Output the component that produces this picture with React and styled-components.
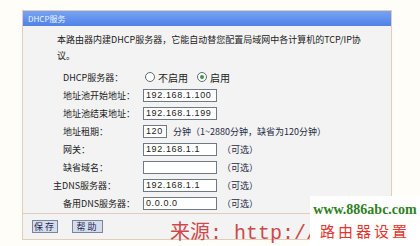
import styled, { createGlobalStyle } from "styled-components";

const GlobalStyle = createGlobalStyle`
  html, body {
    margin: 0;
    padding: 0;
    background: #fffdf7;
  }
  body {
    font-family: "Noto Sans CJK SC", "Liberation Sans", sans-serif;
  }
`;

const Page = styled.div`
  position: relative;
  width: 420px;
  height: 246px;
  overflow: hidden;
  padding: 10px 0 0 22px;
  box-sizing: border-box;
`;

const Panel = styled.section`
  width: 370px;
  border: 1px solid #e2cdb8;
  background: #f3f3f3;
  box-sizing: border-box;
`;

const Header = styled.div`
  height: 15px;
  line-height: 15px;
  padding-left: 5px;
  font-size: 8px;
  color: #eef3ff;
  background: linear-gradient(#77a3f3, #4f82e8);
`;

const Body = styled.div`
  padding: 6px 0 1px;
  color: #222;
  font-size: 9px;
`;

const Intro = styled.p`
  margin: 0;
  padding-left: 34px;
  line-height: 16px;
  white-space: nowrap;
`;

const Form = styled.div`
  margin-top: 4px;
  padding-left: 40px;
`;

const Row = styled.div`
  display: flex;
  align-items: center;
  height: 18px;
`;

const Label = styled.span`
  width: ${(p) => 80 - (p.$shift || 0)}px;
  margin-left: ${(p) => p.$shift || 0}px;
  white-space: nowrap;
`;

const Input = styled.div`
  width: ${(p) => p.$w || 74}px;
  height: 13px;
  box-sizing: border-box;
  border: 1px solid #6f7a86;
  background: #fff;
  padding-left: 2px;
  font-family: "Liberation Sans", sans-serif;
  font-size: 9px;
  line-height: 11px;
  letter-spacing: 0.6px;
  color: #222;
`;

const Note = styled.span`
  margin-left: ${(p) => p.$gap || 5}px;
  color: #1f2a44;
  white-space: nowrap;
`;

const RadioGroup = styled.div`
  display: flex;
  align-items: center;
  gap: 3px;
  padding-left: 2px;
  font-size: 10px;
`;

const Radio = styled.span`
  display: inline-flex;
  align-items: center;
  justify-content: center;
  width: 8px;
  height: 8px;
  border: 1px solid #5b6a76;
  border-radius: 50%;
  background: #fff;
  margin-left: ${(p) => (p.$first ? 0 : 6)}px;

  &::after {
    content: "";
    display: ${(p) => (p.$checked ? "block" : "none")};
    width: 4px;
    height: 4px;
    border-radius: 50%;
    background: #3c9a3c;
  }
`;

const Footer = styled.div`
  display: flex;
  align-items: center;
  gap: 14px;
  height: 25px;
  padding-left: 9px;
  border-top: 1px solid #e2cdb8;
`;

const Button = styled.button`
  width: ${(p) => p.$w}px;
  height: 13px;
  padding: 0;
  border: 1px solid #7c8496;
  background: #d5dcec;
  color: #1b2550;
  font-family: "Noto Sans CJK SC", sans-serif;
  font-size: 9px;
  line-height: 11px;
  letter-spacing: 2px;
  white-space: nowrap;
  text-align: center;
`;

const Source = styled.div`
  position: absolute;
  left: 170px;
  top: 216px;
  color: #cc4a4c;
  font-size: 20px;
  white-space: nowrap;
  font-family: "Liberation Mono", "Noto Sans CJK SC", monospace;
`;

const Badge = styled.div`
  position: absolute;
  left: 310px;
  top: 196px;
  width: 110px;
  height: 50px;
  background: #fff;
  display: flex;
  flex-direction: column;
  align-items: center;
  padding-top: 6px;
  box-sizing: border-box;
`;

const Site = styled.div`
  font-family: "Liberation Serif", serif;
  font-weight: bold;
  font-size: 14px;
  line-height: 16px;
  color: #2f7f25;
`;

const Caption = styled.div`
  margin-top: 4px;
  font-size: 15px;
  line-height: 18px;
  letter-spacing: 3px;
  color: #e2352d;
`;

const rows = [
  { label: "地址池开始地址：", value: "192.168.1.100" },
  { label: "地址池结束地址：", value: "192.168.1.199" },
];

const optional = [
  { label: "网关：", value: "192.168.1.1" },
  { label: "缺省域名：", value: "" },
  { label: "主DNS服务器：", value: "192.168.1.1", shift: -10 },
  { label: "备用DNS服务器：", value: "0.0.0.0" },
];

export default function App() {
  return (
    <>
      <GlobalStyle />
      <Page>
        <Panel>
          <Header>DHCP服务</Header>
          <Body>
            <Intro>
              本路由器内建DHCP服务器，它能自动替您配置局域网中各计算机的TCP/IP协
              <br />
              议。
            </Intro>
            <Form>
              <Row>
                <Label>DHCP服务器：</Label>
                <RadioGroup>
                  <Radio $first />
                  <span>不启用</span>
                  <Radio $checked />
                  <span>启用</span>
                </RadioGroup>
              </Row>
              {rows.map((r) => (
                <Row key={r.label}>
                  <Label>{r.label}</Label>
                  <Input>{r.value}</Input>
                </Row>
              ))}
              <Row>
                <Label>地址租期：</Label>
                <Input $w={24}>120</Input>
                <Note $gap={6}>分钟（1~2880分钟，缺省为120分钟）</Note>
              </Row>
              {optional.map((r) => (
                <Row key={r.label}>
                  <Label $shift={r.shift}>{r.label}</Label>
                  <Input>{r.value}</Input>
                  <Note>（可选）</Note>
                </Row>
              ))}
            </Form>
          </Body>
          <Footer>
            <Button $w={26}>保存</Button>
            <Button $w={31}>帮助</Button>
          </Footer>
        </Panel>
        <Source>来源: http://</Source>
        <Badge>
          <Site>www.886abc.com</Site>
          <Caption>路由器设置</Caption>
        </Badge>
      </Page>
    </>
  );
}
